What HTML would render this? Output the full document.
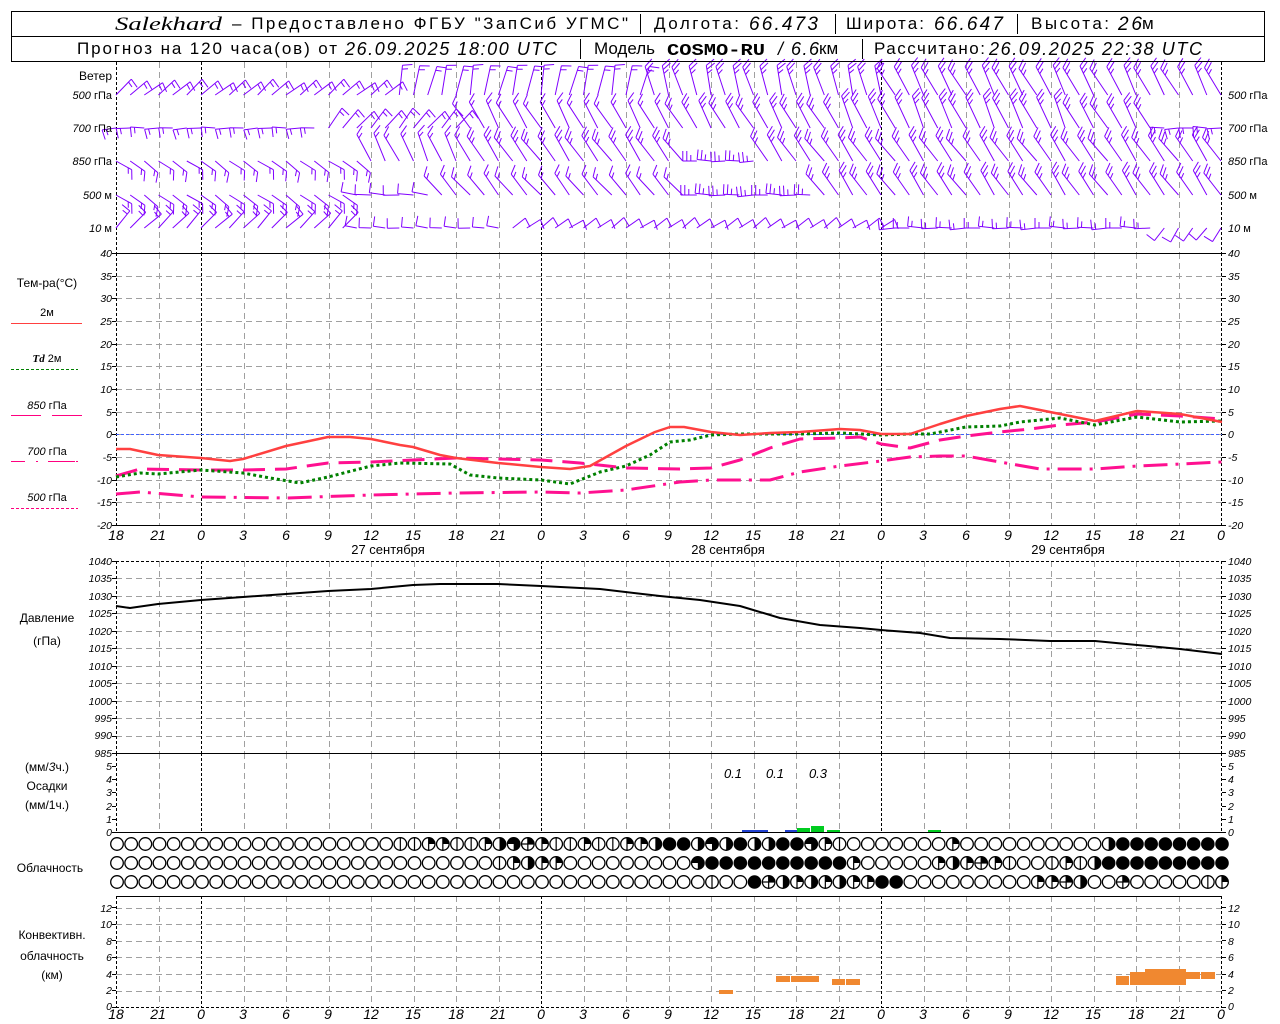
<!DOCTYPE html>
<html><head><meta charset="utf-8">
<style>
html,body{margin:0;padding:0;background:#fff;}
svg{display:block;}
.t{font-family:"Liberation Sans","DejaVu Sans",sans-serif;}
.n{font-family:"Liberation Sans","DejaVu Sans",sans-serif;font-style:italic;font-size:10.5px;}
.l{text-anchor:end;}
.x{font-family:"Liberation Sans",sans-serif;font-style:italic;font-size:14px;text-anchor:middle;}
</style></head>
<body>
<svg id="s" width="1280" height="1024" viewBox="0 0 1280 1024" xmlns="http://www.w3.org/2000/svg">
<rect x="0" y="0" width="1280" height="1024" fill="#fff"/>
<g id="grid"></g>
<g id="wind" stroke="#8000ff" stroke-width="1" fill="none"></g>
<g id="curves" fill="none"></g>
<g id="clouds"></g>
<!-- header -->
<rect x="11.5" y="11.5" width="1253" height="50" fill="none" stroke="#000"/>
<line x1="11" y1="36.5" x2="1265" y2="36.5" stroke="#000"/>
<line x1="640.5" y1="14" x2="640.5" y2="34" stroke="#000"/>
<line x1="835.5" y1="14" x2="835.5" y2="34" stroke="#000"/>
<line x1="1017.5" y1="14" x2="1017.5" y2="34" stroke="#000"/>
<line x1="580.5" y1="39" x2="580.5" y2="59" stroke="#000"/>
<line x1="862.5" y1="39" x2="862.5" y2="59" stroke="#000"/>
<g class="t" font-size="17" fill="#000">
<text x="115" y="30" font-family="Liberation Serif,serif" font-style="italic" font-size="19" textLength="107" lengthAdjust="spacingAndGlyphs">Salekhard</text>
<text x="232" y="29" textLength="396" lengthAdjust="spacing">– Предоставлено ФГБУ "ЗапСиб УГМС"</text>
<text x="654" y="29" textLength="85" lengthAdjust="spacing">Долгота:</text>
<text x="749" y="30" font-style="italic" font-size="19" textLength="69" lengthAdjust="spacing">66.473</text>
<text x="846" y="29" textLength="78" lengthAdjust="spacing">Широта:</text>
<text x="934" y="30" font-style="italic" font-size="19" textLength="69" lengthAdjust="spacing">66.647</text>
<text x="1031" y="29" textLength="78" lengthAdjust="spacing">Высота:</text>
<text x="1118" y="30" font-style="italic" font-size="19" textLength="24">26</text><text x="1142" y="29">м</text>
<text x="77" y="54" textLength="260" lengthAdjust="spacing">Прогноз на 120 часа(ов) от</text>
<text x="345" y="55" font-style="italic" font-size="18" textLength="212" lengthAdjust="spacing">26.09.2025 18:00 UTC</text>
<text x="594" y="54" textLength="61" lengthAdjust="spacing">Модель</text>
<text x="667" y="55" font-family="Liberation Mono,monospace" font-weight="bold" font-size="17" textLength="98" lengthAdjust="spacingAndGlyphs">COSMO-RU</text>
<text x="778" y="55" font-style="italic" font-size="18">/</text>
<text x="791" y="55" font-style="italic" font-size="18" textLength="28">6.6</text><text x="819" y="54">км</text>
<text x="874" y="54" textLength="111" lengthAdjust="spacing">Рассчитано:</text>
<text x="989" y="55" font-style="italic" font-size="18" textLength="213" lengthAdjust="spacing">26.09.2025 22:38 UTC</text>
</g>
<g class="t" font-size="11">
<text x="112" y="80" text-anchor="end" font-size="12">Ветер</text>
<text x="112" y="99" text-anchor="end"><tspan font-style="italic">500</tspan> гПа</text>
<text x="112" y="132" text-anchor="end"><tspan font-style="italic">700</tspan> гПа</text>
<text x="112" y="165" text-anchor="end"><tspan font-style="italic">850</tspan> гПа</text>
<text x="112" y="199" text-anchor="end"><tspan font-style="italic">500</tspan>  м</text>
<text x="112" y="232" text-anchor="end"><tspan font-style="italic">10</tspan>   м</text>
<text x="1228" y="99"><tspan font-style="italic">500</tspan> гПа</text>
<text x="1228" y="132"><tspan font-style="italic">700</tspan> гПа</text>
<text x="1228" y="165"><tspan font-style="italic">850</tspan> гПа</text>
<text x="1228" y="199"><tspan font-style="italic">500</tspan>  м</text>
<text x="1228" y="232"><tspan font-style="italic">10</tspan>   м</text>
</g>
<g class="t" font-size="12" text-anchor="middle">
<text x="47" y="287">Тем-ра(°C)</text>
<text x="47" y="316" font-size="11">2м</text>
<text x="47" y="362" font-size="11"><tspan font-style="italic" font-weight="bold" font-family="Liberation Serif,serif">Td</tspan>  2м</text>
<text x="47" y="409" font-size="11"><tspan font-style="italic">850</tspan> гПа</text>
<text x="47" y="455" font-size="11"><tspan font-style="italic">700</tspan> гПа</text>
<text x="47" y="501" font-size="11"><tspan font-style="italic">500</tspan> гПа</text>
<text x="47" y="622">Давление</text>
<text x="47" y="645">(гПа)</text>
<text x="47" y="771">(мм/<tspan font-style="italic">3</tspan>ч.)</text>
<text x="47" y="790">Осадки</text>
<text x="47" y="809">(мм/1ч.)</text>
<text x="50" y="872">Облачность</text>
<text x="52" y="939">Конвективн.</text>
<text x="52" y="960">облачность</text>
<text x="52" y="979">(км)</text>
</g>
<line x1="11" y1="323.5" x2="82" y2="323.5" stroke="#ff4040" stroke-width="1"/>
<line x1="11" y1="369.5" x2="78" y2="369.5" stroke="#008000" stroke-dasharray="3,2"/>
<path d="M11 415.5H41M52 415.5H82" stroke="#ff0080"/>
<path d="M11 461.5H25M36 461.5H38M48 461.5H75M76 461.5H78" stroke="#ff0080"/>
<line x1="11" y1="508.5" x2="78" y2="508.5" stroke="#ff0080" stroke-dasharray="3,2"/>
<g class="n">
<g class="l">
<text x="112" y="257">40</text><text x="112" y="280">35</text><text x="112" y="302">30</text><text x="112" y="325">25</text><text x="112" y="348">20</text><text x="112" y="370">15</text><text x="112" y="393">10</text><text x="112" y="416">5</text><text x="112" y="438">0</text><text x="112" y="461">-5</text><text x="112" y="484">-10</text><text x="112" y="506">-15</text><text x="112" y="529">-20</text>
<text x="112" y="565">1040</text><text x="112" y="582">1035</text><text x="112" y="600">1030</text><text x="112" y="617">1025</text><text x="112" y="635">1020</text><text x="112" y="652">1015</text><text x="112" y="670">1010</text><text x="112" y="687">1005</text><text x="112" y="705">1000</text><text x="112" y="722">995</text><text x="112" y="739">990</text><text x="112" y="757">985</text>
<text x="112" y="770">5</text><text x="112" y="783">4</text><text x="112" y="796">3</text><text x="112" y="810">2</text><text x="112" y="823">1</text><text x="112" y="836">0</text>
<text x="112" y="912">12</text><text x="112" y="928">10</text><text x="112" y="945">8</text><text x="112" y="961">6</text><text x="112" y="978">4</text><text x="112" y="994">2</text><text x="112" y="1010">0</text>
</g>
<text x="1228" y="257">40</text><text x="1228" y="280">35</text><text x="1228" y="302">30</text><text x="1228" y="325">25</text><text x="1228" y="348">20</text><text x="1228" y="370">15</text><text x="1228" y="393">10</text><text x="1228" y="416">5</text><text x="1228" y="438">0</text><text x="1228" y="461">-5</text><text x="1228" y="484">-10</text><text x="1228" y="506">-15</text><text x="1228" y="529">-20</text>
<text x="1228" y="565">1040</text><text x="1228" y="582">1035</text><text x="1228" y="600">1030</text><text x="1228" y="617">1025</text><text x="1228" y="635">1020</text><text x="1228" y="652">1015</text><text x="1228" y="670">1010</text><text x="1228" y="687">1005</text><text x="1228" y="705">1000</text><text x="1228" y="722">995</text><text x="1228" y="739">990</text><text x="1228" y="757">985</text>
<text x="1228" y="770">5</text><text x="1228" y="783">4</text><text x="1228" y="796">3</text><text x="1228" y="810">2</text><text x="1228" y="823">1</text><text x="1228" y="836">0</text>
<text x="1228" y="912">12</text><text x="1228" y="928">10</text><text x="1228" y="945">8</text><text x="1228" y="961">6</text><text x="1228" y="978">4</text><text x="1228" y="994">2</text><text x="1228" y="1010">0</text>
</g>
<g class="x">
<text x="116" y="540">18</text><text x="158" y="540">21</text><text x="201" y="540">0</text><text x="243" y="540">3</text><text x="286" y="540">6</text><text x="328" y="540">9</text><text x="371" y="540">12</text><text x="413" y="540">15</text><text x="456" y="540">18</text><text x="498" y="540">21</text><text x="541" y="540">0</text><text x="583" y="540">3</text><text x="626" y="540">6</text><text x="668" y="540">9</text><text x="711" y="540">12</text><text x="753" y="540">15</text><text x="796" y="540">18</text><text x="838" y="540">21</text><text x="881" y="540">0</text><text x="923" y="540">3</text><text x="966" y="540">6</text><text x="1008" y="540">9</text><text x="1051" y="540">12</text><text x="1093" y="540">15</text><text x="1136" y="540">18</text><text x="1178" y="540">21</text><text x="1221" y="540">0</text>
<text x="116" y="1019">18</text><text x="158" y="1019">21</text><text x="201" y="1019">0</text><text x="243" y="1019">3</text><text x="286" y="1019">6</text><text x="328" y="1019">9</text><text x="371" y="1019">12</text><text x="413" y="1019">15</text><text x="456" y="1019">18</text><text x="498" y="1019">21</text><text x="541" y="1019">0</text><text x="583" y="1019">3</text><text x="626" y="1019">6</text><text x="668" y="1019">9</text><text x="711" y="1019">12</text><text x="753" y="1019">15</text><text x="796" y="1019">18</text><text x="838" y="1019">21</text><text x="881" y="1019">0</text><text x="923" y="1019">3</text><text x="966" y="1019">6</text><text x="1008" y="1019">9</text><text x="1051" y="1019">12</text><text x="1093" y="1019">15</text><text x="1136" y="1019">18</text><text x="1178" y="1019">21</text><text x="1221" y="1019">0</text>
</g>
<g class="t" font-size="13" text-anchor="middle">
<text x="388" y="554">27 сентября</text>
<text x="728" y="554">28 сентября</text>
<text x="1068" y="554">29 сентября</text>
</g>
<g class="n" font-size="13" text-anchor="middle">
<text x="733" y="778" font-size="13">0.1</text><text x="775" y="778" font-size="13">0.1</text><text x="818" y="778" font-size="13">0.3</text>
</g>
<g>
<rect x="742" y="830" width="26" height="2" fill="#2040d0"/>
<rect x="785" y="830" width="12" height="2" fill="#2040d0"/>
<rect x="797" y="828" width="13" height="4" fill="#00cc20"/>
<rect x="811" y="826" width="13" height="6" fill="#00cc20"/>
<rect x="827" y="830" width="13" height="2" fill="#00cc20"/>
<rect x="928" y="830" width="13" height="2" fill="#00cc20"/>
</g>
<g fill="#f08830">
<rect x="719" y="990" width="14" height="4"/>
<rect x="776" y="976" width="14" height="6"/><rect x="791" y="976" width="28" height="6"/>
<rect x="832" y="979" width="13" height="6"/><rect x="846" y="979" width="14" height="6"/>
<rect x="1116" y="976" width="13" height="9"/>
<rect x="1130" y="972" width="56" height="13"/>
<rect x="1145" y="969" width="41" height="4"/>
<rect x="1186" y="972" width="14" height="7"/><rect x="1201" y="972" width="14" height="7"/>
</g>
</svg>
<script>
(function(){
var NS="http://www.w3.org/2000/svg";
function el(p,t,a){var e=document.createElementNS(NS,t);for(var k in a)e.setAttribute(k,a[k]);p.appendChild(e);return e;}
var g=document.getElementById("grid");
var X0=116,X1=1222,DX=42.5;
var segs=[[62,253],[253,525],[561,753],[753,832],[896,1007]];
function hl(y,dash,col){el(g,"line",{x1:X0,x2:X1,y1:y+0.5,y2:y+0.5,stroke:col||"#a0a0a0","stroke-dasharray":dash||"6,4"});}
for(var k=1;k<12;k++)hl(Math.round(253+k*22.67));
for(var k=1;k<11;k++)hl(Math.round(561+k*17.45));
for(var k=1;k<7;k++)hl(Math.round(907.5+(k-1)*16.6));
for(var s=0;s<segs.length;s++){
 for(var k=0;k<=26;k++){
  var x=Math.round(X0+k*DX)+0.5;
  var blk=(k==0||k==26||k%8==2);
  el(g,"line",{x1:x,x2:x,y1:segs[s][0],y2:segs[s][1],stroke:blk?"#000":"#a0a0a0","stroke-dasharray":blk?"3,2":"6,4"});
 }
}
[[253,525,12],[561,753,11],[766,832,5],[907,1007,6]].forEach(function(a){
 for(var i=0;i<=a[2];i++){var y=Math.round(a[0]+(a[1]-a[0])*i/a[2])+0.5;
  el(g,"line",{x1:X0-4,x2:X0,y1:y,y2:y,stroke:"#000"});el(g,"line",{x1:X1,x2:X1+4,y1:y,y2:y,stroke:"#000"});}
});
el(g,"line",{x1:X0,x2:X1,y1:253.5,y2:253.5,stroke:"#000"});
el(g,"line",{x1:X0,x2:X1,y1:525.5,y2:525.5,stroke:"#000"});
el(g,"line",{x1:X0,x2:X1,y1:561.5,y2:561.5,stroke:"#000","stroke-dasharray":"3,2"});
el(g,"line",{x1:X0,x2:X1,y1:753.5,y2:753.5,stroke:"#000"});
el(g,"line",{x1:X0,x2:X1,y1:832.5,y2:832.5,stroke:"#000"});
el(g,"line",{x1:X0,x2:X1,y1:896.5,y2:896.5,stroke:"#000"});
el(g,"line",{x1:X0,x2:X1,y1:1007.5,y2:1007.5,stroke:"#000","stroke-dasharray":"3,2"});
el(g,"line",{x1:X0,x2:X1,y1:434.5,y2:434.5,stroke:"#4060ff","stroke-dasharray":"3,2"});
var w=document.getElementById("wind");
var HX=DX/3;
function barb(x,y,th,n,L,fo){
 var r=th*Math.PI/180,dx=Math.sin(r),dy=-Math.cos(r);
 var ex=x+L*dx,ey=y+L*dy;var d="M"+x.toFixed(1)+" "+y.toFixed(1)+"L"+ex.toFixed(1)+" "+ey.toFixed(1);
 var fr=(th+fo)*Math.PI/180,fx=Math.sin(fr),fy=-Math.cos(fr);
 for(var j=0;j<n;j++){var px=ex-j*4*dx,py=ey-j*4*dy;var fl=(j==n-1&&n>1)?6:10;
  d+="M"+px.toFixed(1)+" "+py.toFixed(1)+"L"+(px+fl*fx).toFixed(1)+" "+(py+fl*fy).toFixed(1);}
 el(w,"path",{d:d});
}
var rows=[
 [95,[[0,20,50,2,22,100],[20,38,12,2,30,80],[38,55,-15,3,30,60],[55,79,-28,3,32,60]]],
 [128,[[0,15,-92,2,14,-100],[15,25,40,2,24,100],[25,40,-30,2,30,60],[40,52,-30,3,30,60],[52,68,-25,3,34,60],[68,74,-30,3,30,60],[74,79,-90,2,14,-100]]],
 [161,[[0,18,125,2,18,60],[18,26,-25,2,30,60],[26,41,-35,3,30,60],[41,46,-90,3,14,90],[46,79,-35,3,30,60]]],
 [195,[[0,17,125,2,18,60],[17,23,-85,1,16,90],[23,41,-40,2,26,60],[41,50,-90,3,16,90],[50,79,-35,3,28,60]]],
 [228,[[0,17,45,2,22,-90],[17,28,-85,1,12,90],[28,55,55,1,16,100],[55,74,-90,2,16,90],[74,79,215,1,16,90]]]
];
rows.forEach(function(r){r[1].forEach(function(sg){for(var i=sg[0];i<sg[1];i++){barb(X0+i*HX,r[0],sg[2]+((i*7)%5-2)*3,sg[3],sg[4],sg[5]);}});});
var c=document.getElementById("curves");
function line(pts,col,wd,dash){var d="";pts.forEach(function(p,i){d+=(i?"L":"M")+p[0]+" "+p[1];});var a={d:d,stroke:col,"stroke-width":wd,"stroke-linejoin":"round"};if(dash)a["stroke-dasharray"]=dash;el(c,"path",a);}
line([[116,476],[140,469],[201,470],[243,470],[286,469],[328,463],[371,462],[413,460],[456,458],[498,459],[541,460],[580,463],[626,468],[680,469],[711,468],[740,460],[770,448],[800,439],[840,438],[860,437],[881,444],[910,448],[940,440],[966,436],[1000,432],[1030,429],[1060,425],[1095,422],[1137,414],[1180,416],[1222,419]],"#ff1090",3,"22,10");
line([[116,494],[140,492],[201,497],[286,498],[371,495],[456,493],[541,492],[580,493],[626,490],[680,482],[711,480],[770,480],[800,472],[840,466],[881,461],[910,457],[940,456],[966,456],[1000,462],[1040,469],[1095,469],[1137,466],[1180,464],[1222,462]],"#ff1090",3,"24,8,3,8");
line([[116,477],[140,473],[158,474],[201,470],[243,473],[270,478],[300,483],[328,477],[371,466],[400,463],[450,464],[470,475],[498,478],[541,480],[570,484],[600,472],[626,466],[650,455],[670,442],[690,440],[711,435],[740,434],[800,434],[840,433],[881,435],[910,434],[930,434],[966,427],[1000,426],[1020,422],[1060,418],[1095,425],[1137,417],[1180,422],[1222,421]],"#008000",3,"3,3");
line([[116,449],[130,449],[158,455],[201,458],[230,461],[243,459],[286,446],[328,437],[350,437],[371,439],[400,445],[413,447],[440,455],[456,458],[498,463],[541,467],[570,469],[590,466],[626,446],[655,432],[670,427],[684,427],[711,432],[740,435],[770,433],[800,432],[840,429],[860,430],[881,434],[910,434],[940,424],[966,416],[1000,409],[1020,406],[1050,412],[1095,421],[1137,411],[1180,414],[1222,422]],"#ff4040",2.5);
line([[116,606],[130,608],[158,604],[201,600],[243,597],[286,594],[328,591],[371,589],[413,585],[440,584],[498,584],[541,586],[600,589],[660,596],[700,600],[740,606],[780,618],[820,625],[860,628],[881,630],[920,633],[950,638],[1000,639],[1050,641],[1095,641],[1137,645],[1180,649],[1222,654]],"#000",2);
var cl=document.getElementById("clouds");
function fill(arr,n,v,a,b){for(var i=a;i<=b;i++)arr[i]=v;}
function mk(){var a=[];for(var i=0;i<79;i++)a.push("O");return a;}
var r1=mk();var s1={20:"V",21:"V",22:"q",23:"q",24:"V",25:"V",26:"q",27:"h",28:"3",29:"H",30:"q",31:"V",32:"V",33:"q",34:"V",35:"V",36:"q",37:"q",38:"h",39:"F",40:"F",41:"h",42:"3",43:"h",44:"F",45:"h",46:"h",47:"F",48:"F",49:"3",50:"q",51:"V",59:"q",70:"h"};
for(var k in s1)r1[k]=s1[k];fill(r1,0,"F",71,78);
var r2=mk();var s2={27:"V",28:"q",29:"h",30:"q",31:"q",52:"q",58:"q",59:"h",60:"q",61:"H",62:"q",63:"V",66:"V",67:"q",68:"V",69:"h"};
for(var k in s2)r2[k]=s2[k];fill(r2,0,"F",41,51);fill(r2,0,"F",70,78);r2[41]="3";
var r3=mk();var s3={42:"V",45:"F",46:"H",47:"h",48:"q",49:"h",50:"q",51:"h",52:"q",53:"q",54:"F",55:"F",65:"q",66:"q",67:"H",68:"h",71:"H",77:"V",78:"q"};
for(var k in s3)r3[k]=s3[k];
function circ(x,y,t){var R=6.3;
 if(t=="F"){el(cl,"circle",{cx:x,cy:y,r:R+0.5,fill:"#000"});return;}
 el(cl,"circle",{cx:x,cy:y,r:R,fill:"#fff",stroke:"#000","stroke-width":1.3});
 if(t=="q"||t=="H")el(cl,"path",{d:"M"+x+" "+y+"V"+(y-R)+"A"+R+" "+R+" 0 0 1 "+(x+R)+" "+y+"Z",fill:"#000"});
 if(t=="h")el(cl,"path",{d:"M"+x+" "+(y-R)+"A"+R+" "+R+" 0 0 1 "+x+" "+(y+R)+"Z",fill:"#000"});
 if(t=="3")el(cl,"path",{d:"M"+x+" "+y+"H"+(x-R)+"A"+R+" "+R+" 0 1 1 "+x+" "+(y+R)+"Z",fill:"#000"});
 if(t=="V"||t=="q"||t=="H")el(cl,"line",{x1:x,x2:x,y1:y-R,y2:y+R,stroke:"#000","stroke-width":1.2});
 if(t=="H")el(cl,"line",{x1:x-R,x2:x+R,y1:y,y2:y,stroke:"#000","stroke-width":1.2});
}
for(var i=0;i<79;i++){var x=X0+1+i*HX;circ(x,844,r1[i]);circ(x,863,r2[i]);circ(x,882,r3[i]);}
})();
</script>
</body></html>
